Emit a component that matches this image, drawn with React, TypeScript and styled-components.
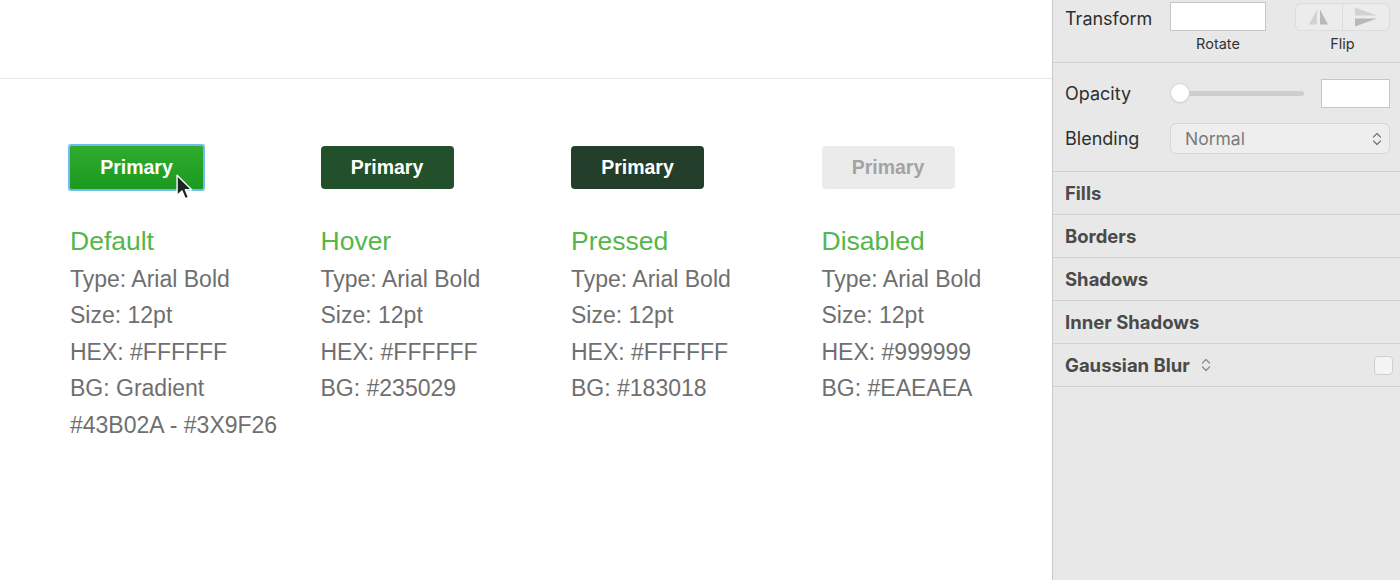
import React from 'react';
import styled, { createGlobalStyle, css } from 'styled-components';

const GlobalStyle = createGlobalStyle`
  html, body {
    margin: 0;
    padding: 0;
    background: #ffffff;
    overflow: hidden;
  }
`;

const Page = styled.div`
  display: flex;
  width: 1400px;
  height: 580px;
`;

const Canvas = styled.div`
  flex: 0 0 1052px;
  min-width: 0;
  overflow: hidden;
  display: flex;
  flex-direction: column;
  background: #ffffff;
  font-family: 'Liberation Sans', Arial, sans-serif;
`;

const CanvasTop = styled.div`
  height: 78px;
  border-bottom: 1px solid #e6e6e6;
`;

const StateGrid = styled.div`
  display: grid;
  grid-template-columns: repeat(3, 250.5px) 1fr;
  padding: 67px 0 0 70px;
`;

const StateColumn = styled.div`
  display: flex;
  flex-direction: column;
  align-items: flex-start;
`;

const ButtonWrap = styled.div`
  position: relative;
`;

type Variant = 'default' | 'hover' | 'pressed' | 'disabled';

const variantStyles: Record<Variant, ReturnType<typeof css>> = {
  default: css`
    background: linear-gradient(#2fac2d, #1b9a21);
    color: #ffffff;
    border-radius: 1px;
    outline: 2px solid #72bbf0;
  `,
  hover: css`
    background: #22502a;
    color: #ffffff;
  `,
  pressed: css`
    background: #233e2b;
    color: #ffffff;
  `,
  disabled: css`
    background: #ebebeb;
    color: #a3a3a3;
  `,
};

const PrimaryButton = styled.button<{ $variant: Variant }>`
  width: 133px;
  height: 43px;
  border: none;
  border-radius: 4px;
  font-family: 'Liberation Sans', Arial, sans-serif;
  font-weight: 700;
  font-size: 19.5px;
  padding: 0;
  cursor: pointer;
  ${({ $variant }) => variantStyles[$variant]}
`;

const Pointer = styled.svg`
  position: absolute;
  left: 106px;
  top: 28px;
`;

const StateTitle = styled.div`
  margin-top: 34px;
  font-size: 26.5px;
  line-height: 36.5px;
  color: #55b64b;
`;

const SpecList = styled.div`
  margin-top: 1px;
  display: flex;
  flex-direction: column;
`;

const SpecLine = styled.div`
  font-size: 23px;
  line-height: 36.5px;
  color: #6f6f6f;
  white-space: nowrap;
`;

const Inspector = styled.div`
  flex: 1;
  min-width: 0;
  display: flex;
  flex-direction: column;
  background: #e8e8e8;
  border-left: 1px solid #c9c9c9;
  font-family: Inter, 'Noto Sans', sans-serif;
  color: #2f2f2f;
`;

const Section = styled.div<{ $pad?: string }>`
  padding: ${({ $pad }) => $pad || '0 10px 0 12px'};
  border-bottom: 1px solid #d2d2d2;
`;

const Row = styled.div<{ $height?: number; $gapTop?: number }>`
  display: flex;
  align-items: center;
  height: ${({ $height }) => ($height ? `${$height}px` : 'auto')};
  margin-top: ${({ $gapTop }) => $gapTop || 0}px;
`;

const Label = styled.div`
  flex: 0 0 105px;
  font-size: 18px;
  line-height: 29px;
`;

const TopLabel = styled(Label)`
  align-self: flex-start;
  padding-top: 2px;
`;

const FieldStack = styled.div<{ $width: number }>`
  display: flex;
  flex-direction: column;
  align-items: center;
  align-self: flex-start;
  width: ${({ $width }) => $width}px;
`;

const Caption = styled.div`
  margin-top: 4px;
  font-size: 14.5px;
  line-height: 17px;
  color: #333333;
`;

const TextBox = styled.div<{ $width: number }>`
  box-sizing: border-box;
  width: ${({ $width }) => $width}px;
  height: 29px;
  background: #ffffff;
  border: 1px solid #c6c6c6;
`;

const Segmented = styled.div`
  box-sizing: border-box;
  display: flex;
  width: 95px;
  height: 28px;
  margin-top: 1px;
  background: #ececec;
  border: 1px solid #dcdcdc;
  border-radius: 6px;
`;

const Segment = styled.div<{ $divider?: boolean }>`
  flex: 1;
  display: flex;
  align-items: center;
  justify-content: center;
  border-left: ${({ $divider }) => ($divider ? '1px solid #dcdcdc' : 'none')};
`;

const Slider = styled.div`
  position: relative;
  width: 133px;
  height: 29px;
  margin-left: 1px;
  display: flex;
  align-items: center;
`;

const Track = styled.div`
  margin-left: 9px;
  width: 124px;
  height: 5px;
  border-radius: 3px;
  background: #cecece;
`;

const Knob = styled.div`
  position: absolute;
  left: 0;
  top: 5px;
  width: 18px;
  height: 18px;
  border-radius: 50%;
  background: #ffffff;
  box-shadow: 0 0 0 1px #d4d4d4, 0 1px 2px rgba(0, 0, 0, 0.15);
`;

const Select = styled.div`
  box-sizing: border-box;
  flex: 0 0 220px;
  height: 31px;
  display: flex;
  align-items: center;
  justify-content: space-between;
  padding: 0 7px 0 14px;
  background: #eeeeee;
  border: 1px solid #d6d6d6;
  border-radius: 6px;
  font-size: 17.5px;
  color: #7a7a7a;
`;

const SectionHeader = styled(Row)`
  font-size: 18.5px;
  font-weight: 700;
  color: #4a4a4a;
  gap: 11px;
`;

const Spacer = styled.div`
  flex: 1;
`;

const Checkbox = styled.div`
  box-sizing: border-box;
  width: 19px;
  height: 19px;
  margin-right: -3px;
  border-radius: 4px;
  background: #f4f4f4;
  border: 1px solid #cfcfcf;
`;

const UpDown = ({ color = '#7a7a7a' }: { color?: string }) => (
  <svg width="10" height="16" viewBox="0 0 10 16">
    <path d="M1.5 6 L5 2.5 L8.5 6 M1.5 10 L5 13.5 L8.5 10" fill="none" stroke={color} strokeWidth="1.3" strokeLinecap="round" strokeLinejoin="round" />
  </svg>
);

const FlipHorizontalIcon = () => (
  <svg width="22" height="16" viewBox="0 0 22 16">
    <polygon points="9,0.5 9,15.5 1,15.5" fill="#d2d2d2" />
    <polygon points="12,0.5 12,15.5 20,15.5" fill="#b9b9b9" />
  </svg>
);

const FlipVerticalIcon = () => (
  <svg width="24" height="20" viewBox="0 0 24 20">
    <polygon points="1,0.5 23,8.5 1,8.5" fill="#d2d2d2" />
    <polygon points="1,11.5 23,11.5 1,19.5" fill="#b9b9b9" />
  </svg>
);

const states: { variant: Variant; title: string; lines: string[] }[] = [
  {
    variant: 'default',
    title: 'Default',
    lines: ['Type: Arial Bold', 'Size: 12pt', 'HEX: #FFFFFF', 'BG: Gradient', '#43B02A - #3X9F26'],
  },
  {
    variant: 'hover',
    title: 'Hover',
    lines: ['Type: Arial Bold', 'Size: 12pt', 'HEX: #FFFFFF', 'BG: #235029'],
  },
  {
    variant: 'pressed',
    title: 'Pressed',
    lines: ['Type: Arial Bold', 'Size: 12pt', 'HEX: #FFFFFF', 'BG: #183018'],
  },
  {
    variant: 'disabled',
    title: 'Disabled',
    lines: ['Type: Arial Bold', 'Size: 12pt', 'HEX: #999999', 'BG: #EAEAEA'],
  },
];

const sections = ['Fills', 'Borders', 'Shadows', 'Inner Shadows'];

const App: React.FC = () => {
  return (
    <>
      <GlobalStyle />
      <Page>
        <Canvas>
          <CanvasTop />
          <StateGrid>
            {states.map((s) => (
              <StateColumn key={s.title}>
                <ButtonWrap>
                  <PrimaryButton $variant={s.variant}>Primary</PrimaryButton>
                  {s.variant === 'default' && (
                    <Pointer width="17" height="27" viewBox="0 0 16 25">
                      <path
                        d="M1 1 L1 20 L5.6 15.8 L8.7 23 L11.8 21.7 L8.8 14.6 L14.8 14.6 Z"
                        fill="#1c2620"
                        stroke="#ffffff"
                        strokeWidth="1.3"
                        strokeLinejoin="round"
                      />
                    </Pointer>
                  )}
                </ButtonWrap>
                <StateTitle>{s.title}</StateTitle>
                <SpecList>
                  {s.lines.map((l) => (
                    <SpecLine key={l}>{l}</SpecLine>
                  ))}
                </SpecList>
              </StateColumn>
            ))}
          </StateGrid>
        </Canvas>

        <Inspector>
          <Section $pad="2px 10px 0 12px">
            <Row $height={60}>
              <TopLabel>Transform</TopLabel>
              <FieldStack $width={96}>
                <TextBox $width={96} />
                <Caption>Rotate</Caption>
              </FieldStack>
              <Spacer />
              <FieldStack $width={95}>
                <Segmented>
                  <Segment>
                    <FlipHorizontalIcon />
                  </Segment>
                  <Segment $divider>
                    <FlipVerticalIcon />
                  </Segment>
                </Segmented>
                <Caption>Flip</Caption>
              </FieldStack>
            </Row>
          </Section>

          <Section $pad="16px 10px 17px 12px">
            <Row $height={29}>
              <Label>Opacity</Label>
              <Slider>
                <Track />
                <Knob />
              </Slider>
              <Spacer />
              <TextBox $width={69} />
            </Row>
            <Row $height={31} $gapTop={15}>
              <Label>Blending</Label>
              <Select>
                Normal
                <UpDown />
              </Select>
            </Row>
          </Section>

          {sections.map((name) => (
            <Section key={name}>
              <SectionHeader $height={42}>{name}</SectionHeader>
            </Section>
          ))}
          <Section>
            <SectionHeader $height={42}>
              Gaussian Blur
              <UpDown color="#8a8a8a" />
              <Spacer />
              <Checkbox />
            </SectionHeader>
          </Section>
        </Inspector>
      </Page>
    </>
  );
};

export default App;
